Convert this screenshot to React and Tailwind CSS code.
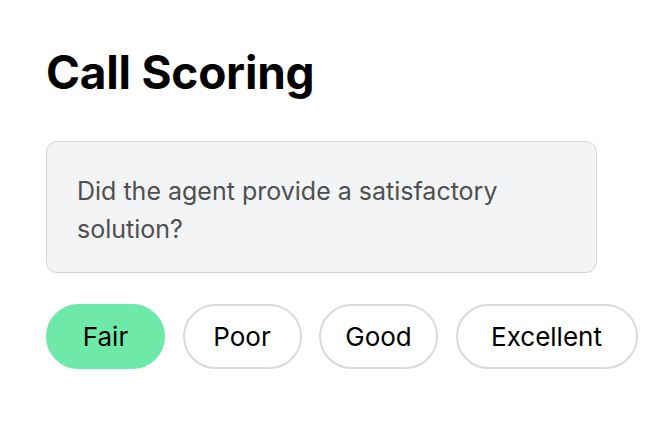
import React, { useState } from 'react';

const options = [
  { label: 'Fair', width: 'w-[119px]' },
  { label: 'Poor', width: 'w-[119px]' },
  { label: 'Good', width: 'w-[119px]' },
  { label: 'Excellent', width: 'w-[182px]' },
];

export default function App() {
  const [selected, setSelected] = useState('Fair');

  return (
    <div className="min-h-screen w-full bg-white font-['Inter',sans-serif]">
      <div className="pl-[46px] pt-[46px]">
        <h1 className="text-[46px] leading-[52px] font-bold tracking-[-0.005em] text-black">
          Call Scoring
        </h1>

        <div className="mt-[43px] w-[551px] h-[132px] rounded-[11px] border border-[#d6d6d6] bg-[#f3f4f6] px-[30px] pt-[30px]">
          <p className="text-[25px] leading-[38px] text-[#4f4f4f] tracking-[0em]">
            Did the agent provide a satisfactory solution?
          </p>
        </div>

        <div className="mt-[31px] flex gap-[17.5px]">
          {options.map((opt) => {
            const active = selected === opt.label;
            return (
              <button
                key={opt.label}
                onClick={() => setSelected(opt.label)}
                className={`${opt.width} h-[65px] shrink-0 rounded-full text-[26px] text-black ${
                  active ? 'bg-[#6ee9a8] border-2 border-[#6ee9a8]' : 'bg-white border-2 border-[#dadada]'
                }`}
              >
                {opt.label}
              </button>
            );
          })}
        </div>
      </div>
    </div>
  );
}
